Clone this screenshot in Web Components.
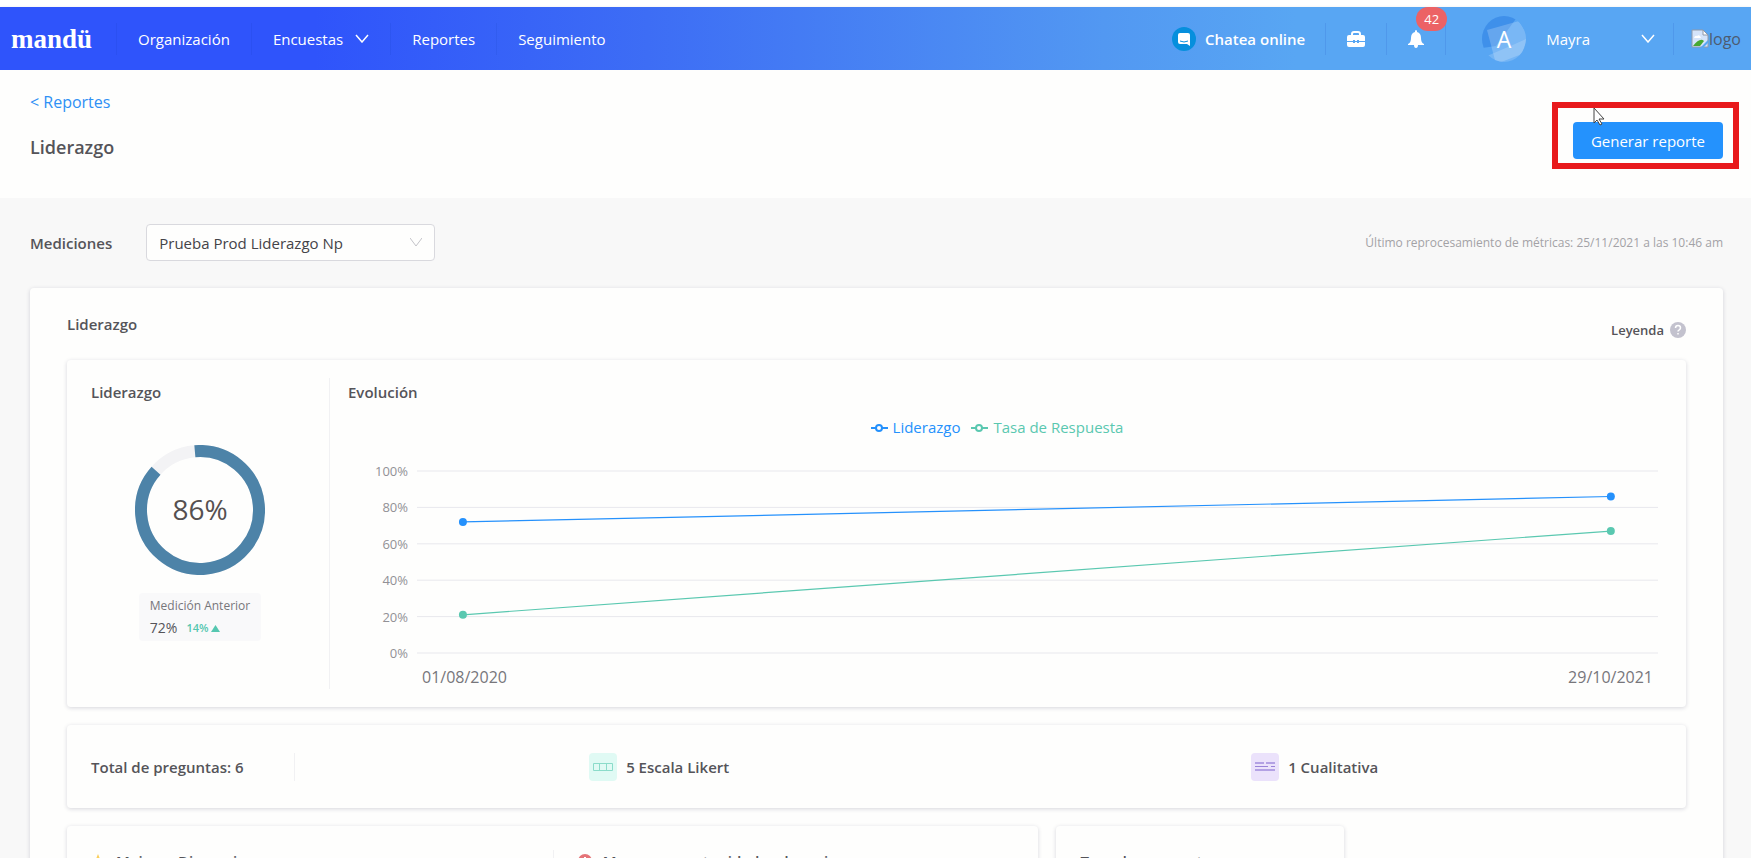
<!DOCTYPE html>
<html lang="es">
<head>
<meta charset="utf-8">
<title>Liderazgo - Reportes</title>
<style>
    body {
        margin: 0;
        padding-top: 7px;
        background: #fff;
        color: #555459;
        font-family: "Open Sans", "Noto Sans", sans-serif;
        font-size: 15px;
        line-height: 24px;
    }
</style>
</head>
<body>
<app-header></app-header>
<report-header heading="Liderazgo">
    <a slot="back" href="#reportes">&lt; Reportes</a>
    <report-button slot="action">Generar reporte</report-button>
</report-header>
<report-page></report-page>

<script>
class BaseElement extends HTMLElement {
    render(html) {
        this.attachShadow({ mode: 'open' });
        this.shadowRoot.innerHTML = `
            <style>
                *, *::before { box-sizing: border-box; }
                svg { display: block; flex: none; }
                h1, h2, h3, p { margin: 0; font-weight: 600; }
                button, select { font: inherit; }
            </style>
            ${html}
        `;
    }
}

class AppHeader extends BaseElement {
    connectedCallback() {
        this.render(`
            <style>
                :host {
                    display: flex;
                    justify-content: space-between;
                    height: 63px;
                    color: #fff;
                    background: linear-gradient(90deg, #2f54fb 18%, #3d6df5 37%, #5298f2 63%, #58a6f3 74%);
                    box-shadow: 0 1px 3px rgba(0, 0, 0, .15);
                }

                nav, .tools { display: flex; align-items: center; }

                a, .tools > * {
                    display: flex;
                    align-items: center;
                    height: 32px;
                    padding: 0 21px;
                    color: inherit;
                    text-decoration: none;
                    border: 0;
                    border-right: 1px solid rgba(20, 60, 180, .12);
                    background: none;
                }

                nav a:last-child, .tools > :last-child { border: 0; }

                .brand {
                    font: bold 27px/32px "Liberation Serif", serif;
                    padding: 0 24px 0 11px;
                }

                .more { gap: 12px; }
                .chat { gap: 9px; font-weight: 600; padding-right: 20px; }
                .bell { position: relative; }

                .badge {
                    position: absolute;
                    top: -16px;
                    right: -2px;
                    padding: 0 8px;
                    border-radius: 12px;
                    background: #ec6265;
                    font-size: 13px;
                    line-height: 24px;
                }

                .user { padding: 0 18px 0 36px; }
                .name { margin: 0 51px 0 20px; }
                .company { padding: 0 10px 0 17px; color: #4d5b70; font-size: 16px; }
            </style>
            <nav>
                <a class="brand" href="#">mandü</a>
                <a href="#organizacion">Organización</a>
                <a class="more" href="#encuestas">Encuestas
                    <svg width="14" height="9" fill="none" stroke="#fff" stroke-width="1.5"><path d="M1 1l6 7 6-7"/></svg>
                </a>
                <a href="#reportes">Reportes</a>
                <a href="#seguimiento">Seguimiento</a>
            </nav>
            <div class="tools">
                <button class="chat">
                    <svg width="24" height="24">
                        <circle cx="12" cy="12" r="12" fill="#068fdd"/>
                        <path d="M8 6h8q2 0 2 2v11l-3-2H8q-2 0-2-2V8q0-2 2-2z" fill="#fff"/>
                        <path d="M8 14q4 2 8 0" fill="none" stroke="#068fdd"/>
                    </svg>
                    Chatea online
                </button>
                <button aria-label="Herramientas">
                    <svg width="18" height="16" fill="#fff">
                        <path fill-rule="evenodd" d="M4 4V3q0-3 3-3h4q3 0 3 3v1h2q2 0 2 2v4h-6V9h-2v1H8V9H6v1H0V6q0-2 2-2zM6 4h6V3q0-1-1-1H7Q6 2 6 3z"/>
                        <path d="M0 11h6v1h2v-1h2v1h2v-1h6v3q0 2-2 2H2q-2 0-2-2z"/>
                    </svg>
                </button>
                <button class="bell" aria-label="Notificaciones">
                    <svg width="16" height="18" fill="#fff">
                        <path d="M7 1q1-2 2 0v1q4 1 4 6 0 5 3 6v1H0v-1q3-1 3-6 0-5 4-6zM6 15h4q0 3-2 3t-2-3z"/>
                    </svg>
                    <span class="badge">42</span>
                </button>
                <button class="user">
                    <svg width="44" height="46" viewBox="0 0 44 46">
                        <defs><clipPath id="face"><ellipse cx="22" cy="23" rx="22" ry="23"/></clipPath></defs>
                        <g clip-path="url(#face)">
                            <path d="M0 0h36L14 30 0 32z" fill="#3f90ea"/>
                            <path d="M5 14L37 5l9 15-6 18-26 10z" fill="#fff" opacity=".2"/>
                            <path d="M5 40l28-12 13-6-8 26H8z" fill="#fff" opacity=".17"/>
                        </g>
                        <text x="22" y="32" text-anchor="middle" font-size="23" font-weight="500" fill="#fff">A</text>
                    </svg>
                    <span class="name">Mayra</span>
                    <svg width="14" height="9" fill="none" stroke="#fff" stroke-width="1.5"><path d="M1 1l6 7 6-7"/></svg>
                </button>
                <a class="company" href="#empresa">
                    <svg width="18" height="20">
                        <path d="M1 1h11l5 5v12H1z" fill="#d5e4fa" stroke="#929aa8"/>
                        <path d="M12 1v5h5z" fill="#fff" stroke="#929aa8"/>
                        <path d="M3 9q1-3 3-2 3-2 4 2z" fill="#fff"/>
                        <path d="M2 17q7-9 11-5l-4 5z" fill="#48a832"/>
                        <path d="M9 19l8-8v3l-5 5z" fill="#58a6f3"/>
                    </svg>
                    logo
                </a>
            </div>
        `);
    }
}

customElements.define('app-header', AppHeader);


class ReportHeader extends BaseElement {
    connectedCallback() {
        this.render(`
            <style>
                :host {
                    display: flex;
                    justify-content: space-between;
                    align-items: flex-start;
                    padding: 20px 12px 28px 30px;
                    background: #fefefd;
                }

                ::slotted(a) { color: #2e90f5; text-decoration: none; font-size: 16px; }
                h1 { margin: 21px 0 11px; font-size: 18px; line-height: 24px; }
                .action { margin-top: 12px; }
            </style>
            <div>
                <slot name="back"></slot>
                <h1>${this.getAttribute('heading')}</h1>
            </div>
            <div class="action"><slot name="action"></slot></div>
        `);
    }
}

customElements.define('report-header', ReportHeader);


class ReportButton extends BaseElement {
    connectedCallback() {
        this.render(`
            <style>
                :host {
                    display: block;
                    position: relative;
                    padding: 14px 10px 4px 15px;
                    border: 6px solid #e81a1c;
                }

                button {
                    display: block;
                    height: 37px;
                    padding: 0 18px;
                    color: #fff;
                    background: #2492fd;
                    border: 0;
                    border-radius: 4px;
                }

                .pointer { position: absolute; left: 35px; top: -1px; }
            </style>
            <button><slot></slot></button>
            <svg class="pointer" width="13" height="19" fill="#fff" stroke="#444">
                <path d="M1 1v15l3-3 3 5 2-1-3-5h5z"/>
            </svg>
        `);
    }
}

customElements.define('report-button', ReportButton);


class ReportCard extends BaseElement {
    connectedCallback() {
        this.render(`
            <style>
                :host {
                    display: block;
                    box-sizing: border-box;
                    border-radius: 4px;
                    background: #fefefd;
                    box-shadow: 0 1px 4px rgba(20, 20, 60, .17);
                }
            </style>
            <slot></slot>
        `);
    }
}

customElements.define('report-card', ReportCard);


class ScoreRing extends BaseElement {
    connectedCallback() {
        const score = Number(this.getAttribute('score'));
        const previous = Number(this.getAttribute('previous'));

        this.render(`
            <style>
                :host { display: flex; flex-direction: column; align-items: center; }

                .previous {
                    margin-top: 18px;
                    padding: 2px 11px;
                    border-radius: 4px;
                    background: #f9f9fa;
                    font-size: 12px;
                    line-height: 22px;
                    color: #77767b;
                }

                .row { display: flex; gap: 9px; color: #55c7b0; font-size: 11px; }
                .row b { color: #555459; font-size: 14px; font-weight: 400; }
                .up { display: flex; align-items: center; gap: 3px; font-weight: 600; }
            </style>
            <svg width="130" height="130" viewBox="0 0 130 130">
                <g fill="none" stroke-width="12" transform="rotate(-95 65 65)">
                    <circle cx="65" cy="65" r="59" stroke="#f3f3f5"/>
                    <circle cx="65" cy="65" r="59" stroke="#4d83a8" pathLength="100" stroke-dasharray="${score + 2} 100"/>
                </g>
                <text x="65" y="75" text-anchor="middle" font-size="28" font-weight="500" fill="#555050">${score}%</text>
            </svg>
            <div class="previous">
                Medición Anterior
                <div class="row">
                    <b>${previous}%</b>
                    <span class="up">${score - previous}%
                        <svg width="9" height="7" fill="#55c7b0"><path d="M4.500 0L9 7H0z"/></svg>
                    </span>
                </div>
            </div>
        `);
    }
}

customElements.define('score-ring', ScoreRing);


class EvolutionChart extends BaseElement {
    #series = [
        { name: 'Liderazgo', color: '#2591fc', values: [72, 86] },
        { name: 'Tasa de Respuesta', color: '#5ac8b0', values: [21, 67] }
    ];
    #ticks = [100, 80, 60, 40, 20, 0];
    #xs = ['3.7%', '96.2%'];

    #legend({ name, color }) {
        return `
            <span style="color: ${color}">
                <svg width="17" height="9" fill="#fff" stroke="${color}" stroke-width="2">
                    <path d="M0 5h17"/><circle cx="8" cy="5" r="3"/>
                </svg>
                ${name}
            </span>
        `;
    }

    #line({ color, values }) {
        const [y1, y2] = values.map(value => `${100 - value}%`);
        const [x1, x2] = this.#xs;

        return `
            <line x1="${x1}" y1="${y1}" x2="${x2}" y2="${y2}" stroke="${color}" stroke-width="1.2"/>
            <circle cx="${x1}" cy="${y1}" r="4" fill="${color}"/>
            <circle cx="${x2}" cy="${y2}" r="4" fill="${color}"/>
        `;
    }

    connectedCallback() {
        this.render(`
            <style>
                :host { display: block; }

                .legend { display: flex; justify-content: center; gap: 11px; margin-bottom: 20px; padding-right: 12px; }
                .legend span { display: flex; align-items: center; gap: 5px; }

                .chart { display: grid; grid-template-columns: 60px 1fr; column-gap: 9px; }

                .ticks {
                    display: flex;
                    flex-direction: column;
                    justify-content: space-between;
                    text-align: right;
                    font-size: 13px;
                    color: #929196;
                }

                .plot { width: 100%; height: 182px; margin: 12px 0; overflow: visible; }

                .dates {
                    grid-column: 2;
                    display: flex;
                    justify-content: space-between;
                    padding: 0 5px;
                    font-size: 16px;
                    color: #77767b;
                }
            </style>
            <div class="legend">${this.#series.map(this.#legend).join('')}</div>
            <div class="chart">
                <div class="ticks">${this.#ticks.map(tick => `<span>${tick}%</span>`).join('')}</div>
                <svg class="plot">
                    ${this.#ticks.map(tick => `<line x1="0" x2="100%" y1="${tick}%" y2="${tick}%" stroke="#e8e8ed"/>`).join('')}
                    ${this.#series.map(s => this.#line(s)).join('')}
                </svg>
                <div class="dates"><span>01/08/2020</span><span>29/10/2021</span></div>
            </div>
        `);
    }
}

customElements.define('evolution-chart', EvolutionChart);


class QuestionType extends BaseElement {
    connectedCallback() {
        this.render(`
            <style>
                :host { display: flex; align-items: center; gap: 9px; font-weight: 600; }
            </style>
            ${this.getAttribute('kind') === 'likert' ? `
                <svg width="28" height="28" fill="none" stroke="#8bdcca">
                    <rect width="28" height="28" rx="4" fill="#e0faf4" stroke="none"/>
                    <path d="M4.500 10.500h19v7h-19zM10.500 10.500v7M17.500 10.500v7"/>
                </svg>
            ` : `
                <svg width="28" height="28" fill="none" stroke="#9a83d8">
                    <rect width="28" height="28" rx="4" fill="#ebe2fb" stroke="none"/>
                    <path d="M4 13.500h13M20 13.500h4"/>
                    <path d="M4 10h9M15 10h9M4 17h20" stroke="#b3a1e4" stroke-width="2"/>
                </svg>
            `}
            <slot></slot>
        `);
    }
}

customElements.define('question-type', QuestionType);


class ReportPage extends BaseElement {
    connectedCallback() {
        this.render(`
            <style>
                :host { display: block; padding: 26px 28px 40px 30px; background: #f8f8f8; }

                .filter { display: flex; align-items: center; height: 37px; margin-bottom: 27px; }
                label { font-weight: 600; margin-right: 34px; }
                .picker { display: grid; width: 289px; align-items: center; }
                .picker > * { grid-area: 1 / 1; }
                .picker svg { justify-self: end; margin-right: 13px; pointer-events: none; }

                select {
                    appearance: none;
                    width: 100%;
                    height: 37px;
                    padding: 0 12px;
                    color: #444348;
                    background: #fefefd;
                    border: 1px solid #d9d9de;
                    border-radius: 4px;
                }

                .updated { margin-left: auto; font-size: 12px; color: #a3a2a6; }

                .main { padding: 24px 37px 37px; }
                .title { display: flex; justify-content: space-between; margin-bottom: 18px; }
                .help { display: flex; align-items: center; gap: 6px; margin-top: 6px; height: 24px; font-size: 13px; }

                .summary { display: flex; padding: 18px 24px 18px 0; }
                .score { width: 263px; padding: 2px 0 0 24px; border-right: 1px solid #f1f1f3; }
                .score score-ring { margin: 41px 20px 46px 0; }
                .evolution { flex: 1; padding: 2px 4px 0 18px; }
                .evolution evolution-chart { margin-top: 11px; }

                .questions {
                    display: grid;
                    grid-template-columns: 228px 5fr 4fr;
                    align-items: center;
                    height: 83px;
                    margin: 18px 0;
                    padding-right: 80px;
                }

                .total { padding-left: 24px; line-height: 28px; border-right: 1px solid #f1f1f3; }
                .questions question-type { justify-content: center; }

                .bottom { display: flex; gap: 18px; }
                .dimensions { display: grid; grid-template-columns: 1fr 1fr; width: 60%; padding: 24px 0; }
                .rate { width: 288px; padding: 24px; }
                h3 { display: flex; align-items: center; gap: 11px; height: 22px; font-size: 15px; }
                .dimensions h3 { padding-left: 24px; }
                .dimensions h3 + h3 { border-left: 1px solid #f1f1f3; }
                h2 { font-size: 15px; }
            </style>
            <div class="filter">
                <label for="measurement">Mediciones</label>
                <div class="picker">
                    <select id="measurement"><option>Prueba Prod Liderazgo Np</option></select>
                    <svg width="12" height="9" fill="none" stroke="#c3c3c8"><path d="M0 0l6 8 6-8"/></svg>
                </div>
                <span class="updated">Último reprocesamiento de métricas: 25/11/2021 a las 10:46 am</span>
            </div>
            <report-card>
                <div class="main">
                    <div class="title">
                        <h2>Liderazgo</h2>
                        <p class="help">Leyenda
                            <svg width="16" height="16">
                                <circle cx="8" cy="8" r="8" fill="#c3c2ce"/>
                                <path d="M5.500 6q0-2.500 2.500-2.500T10.500 6q0 1-1.200 1.800Q8 8.500 8 9.500M8 11v1.500" fill="none" stroke="#fff" stroke-width="1.500"/>
                            </svg>
                        </p>
                    </div>
                    <report-card>
                        <div class="summary">
                            <div class="score">
                                <h2>Liderazgo</h2>
                                <score-ring score="86" previous="72"></score-ring>
                            </div>
                            <div class="evolution">
                                <h2>Evolución</h2>
                                <evolution-chart></evolution-chart>
                            </div>
                        </div>
                    </report-card>
                    <report-card class="questions">
                        <p class="total">Total de preguntas: 6</p>
                        <question-type kind="likert">5 Escala Likert</question-type>
                        <question-type kind="text">1 Cualitativa</question-type>
                    </report-card>
                    <div class="bottom">
                        <report-card class="dimensions">
                            <h3>
                                <svg width="14" height="14" fill="#fbcf5c"><path d="M7 0l2 5 5 .5-4 3.500 1 5-4-3-4 3 1-5-4-3.500L5 5z"/></svg>
                                Mejores Dimensiones
                            </h3>
                            <h3>
                                <svg width="14" height="14"><circle cx="7" cy="7" r="7" fill="#e57478"/><path d="M7 3v5M7 10v2" stroke="#fff" stroke-width="2"/></svg>
                                Mayores oportunidades de mejora
                            </h3>
                        </report-card>
                        <report-card class="rate"><h3>Tasa de respuesta</h3></report-card>
                    </div>
                </div>
            </report-card>
        `);
    }
}

customElements.define('report-page', ReportPage);
</script>
</body>
</html>
